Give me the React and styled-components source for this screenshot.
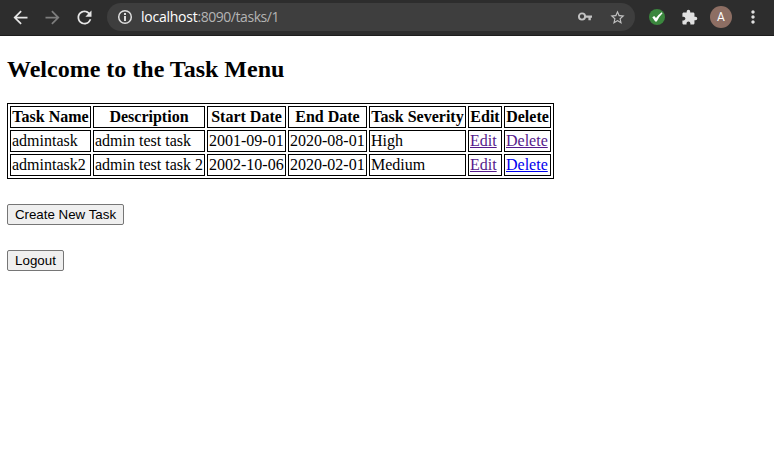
import React from 'react';
import styled, { createGlobalStyle } from 'styled-components';
import {
  MdArrowBack,
  MdArrowForward,
  MdRefresh,
  MdStarBorder,
  MdExtension,
  MdMoreVert,
} from 'react-icons/md';

const GlobalStyle = createGlobalStyle`
  * { box-sizing: border-box; }
  body {
    margin: 0;
    background: #fff;
    color: #000;
    font: 16px/18px "Liberation Serif", "Times New Roman", serif;
    overflow: hidden;
  }
`;

const BrowserBar = styled.header`
  display: flex;
  align-items: center;
  height: 36px;
  padding: 0 10px 1px;
  background: #2d2d2d;
  border-bottom: 1px solid #1d1d1d;
`;

const NavButton = styled.span`
  display: flex;
  align-items: center;
  justify-content: center;
  width: 21px;
  height: 22px;
  margin-right: 11px;
  color: ${({ $dim }) => ($dim ? '#7d7d7d' : '#e6e6e6')};
`;

const AddressBar = styled.div`
  display: flex;
  align-items: center;
  width: 528px;
  height: 28px;
  margin-left: 1px;
  padding: 0 9px 0 10px;
  border-radius: 14px;
  background: #3e3e3e;
  color: #dedede;
`;

const Url = styled.span`
  flex: 1;
  margin-left: 8px;
  color: #b4b4b4;
  font: 14px/18px "Open Sans", sans-serif;
  letter-spacing: -0.45px;
  white-space: nowrap;
`;

const Host = styled.span`
  color: #fff;
  letter-spacing: -0.25px;
`;

const FieldIcon = styled.span`
  display: flex;
  margin-left: ${({ $gap }) => $gap || 0}px;
  color: #c2c2c2;
`;

const Extensions = styled.div`
  display: flex;
  align-items: center;
  margin-left: 14px;
  color: #e0e0e0;
`;

const Puzzle = styled(MdExtension)`
  margin-left: 16px;
`;

const Avatar = styled.span`
  width: 22px;
  height: 22px;
  margin: 0 11px 0 12px;
  border-radius: 50%;
  background: #8d6e63;
  color: #fff;
  font: 12px/22px Roboto, sans-serif;
  text-align: center;
`;

const Page = styled.main`
  padding: 19px 7px 0;
`;

const Title = styled.h2`
  margin: 0 0 20px;
  font-size: 24px;
  line-height: 28px;
`;

const TaskTable = styled.table`
  width: 547px;
  table-layout: fixed;
  border: 1px solid #000;
  border-collapse: separate;
  border-spacing: 2px;
`;

const Column = styled.col`
  width: ${({ $width }) => $width}px;
`;

const HeadCell = styled.th`
  height: 22px;
  padding: 1px;
  border: 1px solid #000;
  white-space: nowrap;
`;

const Cell = styled.td`
  height: 22px;
  padding: 1px;
  border: 1px solid #000;
  white-space: nowrap;
`;

const TaskLink = styled.a`
  color: ${({ $visited }) => ($visited ? '#551a8b' : '#0000ee')};
  text-decoration: underline;
`;

const Actions = styled.div`
  display: flex;
  flex-direction: column;
  align-items: flex-start;
  gap: 25px;
  margin-top: 25px;
`;

const ActionButton = styled.button`
  width: ${({ $width }) => $width}px;
  height: 21px;
  padding: 0;
  border: 1px solid #767676;
  border-radius: 2px;
  background: #efefef;
  color: #000;
  font: 13.333px/17px "Liberation Sans", Arial, sans-serif;
  white-space: nowrap;
`;

const columns = [
  ['Task Name', 81],
  ['Description', 112],
  ['Start Date', 79],
  ['End Date', 79],
  ['Task Severity', 97],
  ['Edit', 34],
  ['Delete', 47],
];

const tasks = [
  { values: ['admintask', 'admin test task', '2001-09-01', '2020-08-01', 'High'], deleteVisited: true },
  { values: ['admintask2', 'admin test task 2', '2002-10-06', '2020-02-01', 'Medium'], deleteVisited: false },
];

const InfoIcon = () => (
  <svg width="16" height="16" viewBox="0 0 16 16">
    <circle cx="8" cy="8" r="6.3" fill="none" stroke="currentColor" strokeWidth="1.5" />
    <path d="M7 4h2v2H7zM7 7h2v5H7z" fill="currentColor" />
  </svg>
);

const KeyIcon = () => (
  <svg width="16" height="16" viewBox="0 0 16 16">
    <circle cx="5" cy="7.5" r="3.1" fill="none" stroke="currentColor" strokeWidth="1.9" />
    <path d="M8 6.4h7v2.3h-1.2v2.5h-2.4V8.7H8z" fill="currentColor" />
  </svg>
);

const CheckBadge = () => (
  <svg width="16" height="16" viewBox="0 0 16 16">
    <circle cx="8" cy="8" r="8" fill="#3b873e" />
    <path d="M3.3 8.3 5.2 7.1 7 9.1Q9 5.8 12.8 3.2L13.5 4.2Q10 7.6 7.8 12.4H6.2Z" fill="#fff" />
  </svg>
);

export default function App() {
  return (
    <>
      <GlobalStyle />
      <BrowserBar>
        <NavButton><MdArrowBack size={21} /></NavButton>
        <NavButton $dim><MdArrowForward size={21} /></NavButton>
        <NavButton><MdRefresh size={21} /></NavButton>
        <AddressBar>
          <InfoIcon />
          <Url><Host>localhost</Host>:8090/tasks/1</Url>
          <FieldIcon><KeyIcon /></FieldIcon>
          <FieldIcon $gap={16}><MdStarBorder size={17} /></FieldIcon>
        </AddressBar>
        <Extensions>
          <CheckBadge />
          <Puzzle size={17} />
          <Avatar>A</Avatar>
          <MdMoreVert size={20} />
        </Extensions>
      </BrowserBar>
      <Page>
        <Title>Welcome to the Task Menu</Title>
        <TaskTable>
          <colgroup>
            {columns.map(([name, width]) => <Column key={name} $width={width} />)}
          </colgroup>
          <thead>
            <tr>{columns.map(([name]) => <HeadCell key={name}>{name}</HeadCell>)}</tr>
          </thead>
          <tbody>
            {tasks.map(({ values, deleteVisited }) => (
              <tr key={values[0]}>
                {values.map((value) => <Cell key={value}>{value}</Cell>)}
                <Cell><TaskLink href="#edit" $visited>Edit</TaskLink></Cell>
                <Cell><TaskLink href="#delete" $visited={deleteVisited}>Delete</TaskLink></Cell>
              </tr>
            ))}
          </tbody>
        </TaskTable>
        <Actions>
          <ActionButton $width={117}>Create New Task</ActionButton>
          <ActionButton $width={57}>Logout</ActionButton>
        </Actions>
      </Page>
    </>
  );
}
